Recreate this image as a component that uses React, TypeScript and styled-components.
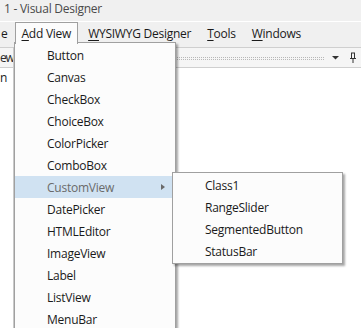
import React from "react";
import styled, { createGlobalStyle } from "styled-components";

const Global = createGlobalStyle`
  html, body { margin: 0; padding: 0; }
  body {
    width: 361px; height: 328px; overflow: hidden;
    background: #ffffff;
    font-family: "Open Sans", "Noto Sans", sans-serif;
    font-size: 12px;
    letter-spacing: -0.25px;
  }
`;

const Window = styled.div`
  position: relative;
  width: 361px;
  height: 328px;
  display: flex;
  flex-direction: column;
  background: #fff;
`;

const TitleBar = styled.div`
  height: 21px;
  background: #f0f0f0;
  color: #4a4a4a;
  display: flex;
  align-items: center;
  padding-left: 4px;
  padding-bottom: 4px;
  box-sizing: border-box;
`;

const MenuBar = styled.div`
  height: 21px;
  background: #f0f0f0;
  display: flex;
  align-items: stretch;
  margin-top: 1px;
`;

const MenuItem = styled.div<{ $open?: boolean; $shift?: number }>`
  display: flex;
  align-items: center;
  padding: 0 ${(p) => (p.$open ? 6 : 7)}px;
  margin-left: ${(p) => p.$shift ?? 0}px;
  color: #1a1a1a;
  white-space: nowrap;
  border: 1px solid ${(p) => (p.$open ? "#a0a0a0" : "transparent")};
  border-bottom: none;
  background: ${(p) => (p.$open ? "#fcfcfc" : "transparent")};
  position: relative;
  z-index: ${(p) => (p.$open ? 3 : 0)};
  height: ${(p) => (p.$open ? "22px" : "auto")};
  box-sizing: border-box;
  u { text-decoration: underline; text-underline-offset: 2px; }
`;

const Gap = styled.div`
  height: 4px;
  background: #f0f0f0;
`;

const Workspace = styled.div`
  flex: 1;
  display: flex;
`;

const SidePane = styled.div`
  width: 13px;
  border-right: 1px solid #c9c9c9;
  display: flex;
  flex-direction: column;
  overflow: hidden;
`;

const SideHeader = styled.div`
  height: 21px;
  border-top: 1px solid #cfcfcf;
  border-bottom: 1px solid #cfcfcf;
  background: #f5f5f5;
  display: flex;
  align-items: center;
  color: #2a2a2a;
  white-space: nowrap;
  letter-spacing: -1.2px;
  box-sizing: border-box;
`;

const SideBody = styled.div`
  padding-top: 1px;
  color: #1a1a1a;
  white-space: nowrap;
`;

const MainPane = styled.div`
  flex: 1;
  display: flex;
  flex-direction: column;
`;

const PaneHeader = styled.div`
  height: 21px;
  border-top: 1px solid #cfcfcf;
  border-bottom: 1px solid #cfcfcf;
  background: #f5f5f5;
  display: flex;
  align-items: center;
  padding: 0 4px 0 4px;
  gap: 9px;
  box-sizing: border-box;
`;

const Grip = styled.div`
  flex: 1;
  height: 3px;
  margin-top: 2px;
  margin-right: -1px;
  border-top: 1px dotted #b8b8b8;
  border-bottom: 1px dotted #b8b8b8;
  box-sizing: border-box;
`;

const Dropdown = styled.div`
  position: absolute;
  left: 14px;
  top: 42px;
  width: 162px;
  height: 300px;
  background: #fcfcfc;
  border: 1px solid #a0a0a0;
  box-shadow: 2px 2px 2px rgba(0, 0, 0, 0.35);
  padding: 1px 2px 0 0;
  box-sizing: border-box;
  z-index: 2;
  display: flex;
  flex-direction: column;
`;

const Item = styled.div<{ $active?: boolean }>`
  height: 22px;
  flex: none;
  display: flex;
  align-items: center;
  padding-left: 32px;
  padding-right: 8px;
  color: ${(p) => (p.$active ? "#6a6a6a" : "#1a1a1a")};
  background: ${(p) => (p.$active ? "#d0e2f2" : "transparent")};
  white-space: nowrap;
  box-sizing: border-box;
`;

const Label = styled.span`
  flex: 1;
`;

const Arrow = styled.span`
  width: 0;
  height: 0;
  border-top: 3px solid transparent;
  border-bottom: 3px solid transparent;
  border-left: 4px solid #6a6a6a;
`;

const SubMenu = styled.div`
  position: absolute;
  left: 172px;
  top: 172px;
  width: 171px;
  height: 92px;
  background: #fcfcfc;
  border: 1px solid #a0a0a0;
  box-shadow: 2px 2px 2px rgba(0, 0, 0, 0.35);
  padding-top: 1px;
  box-sizing: border-box;
  z-index: 4;
  display: flex;
  flex-direction: column;
`;

const items = [
  "Button",
  "Canvas",
  "CheckBox",
  "ChoiceBox",
  "ColorPicker",
  "ComboBox",
  "CustomView",
  "DatePicker",
  "HTMLEditor",
  "ImageView",
  "Label",
  "ListView",
  "MenuBar",
];

const subItems = ["Class1", "RangeSlider", "SegmentedButton", "StatusBar"];

export default function App() {
  return (
    <>
      <Global />
      <Window>
        <TitleBar>1 - Visual Designer</TitleBar>
        <MenuBar>
          <MenuItem $shift={-7}>e</MenuItem>
          <MenuItem $open $shift={-1}>
            <span>
              <u>A</u>dd View
            </span>
          </MenuItem>
          <MenuItem $shift={2}>
            <span>
              <u>W</u>YSIWYG Designer
            </span>
          </MenuItem>
          <MenuItem>
            <span>
              <u>T</u>ools
            </span>
          </MenuItem>
          <MenuItem>
            <span>
              <u>W</u>indows
            </span>
          </MenuItem>
        </MenuBar>
        <Gap />
        <Workspace>
          <SidePane>
            <SideHeader>ew</SideHeader>
            <SideBody>n</SideBody>
          </SidePane>
          <MainPane>
            <PaneHeader>
              <Grip />
              <svg width="8" height="4" viewBox="0 0 8 4">
                <path d="M0 0 H7 L3.5 3.5 Z" fill="#333" />
              </svg>
              <svg width="8" height="11" viewBox="0 0 8 11">
                <path
                  d="M2 1 H6 M2.5 1 V6 M5.5 1 V6 M1 6.5 H7 M4 7 V11"
                  stroke="#333"
                  strokeWidth="1"
                  fill="none"
                />
              </svg>
            </PaneHeader>
          </MainPane>
        </Workspace>
        <Dropdown>
          {items.map((it) => (
            <Item key={it} $active={it === "CustomView"}>
              <Label>{it}</Label>
              {it === "CustomView" && <Arrow />}
            </Item>
          ))}
        </Dropdown>
        <SubMenu>
          {subItems.map((it) => (
            <Item key={it}>{it}</Item>
          ))}
        </SubMenu>
      </Window>
    </>
  );
}
